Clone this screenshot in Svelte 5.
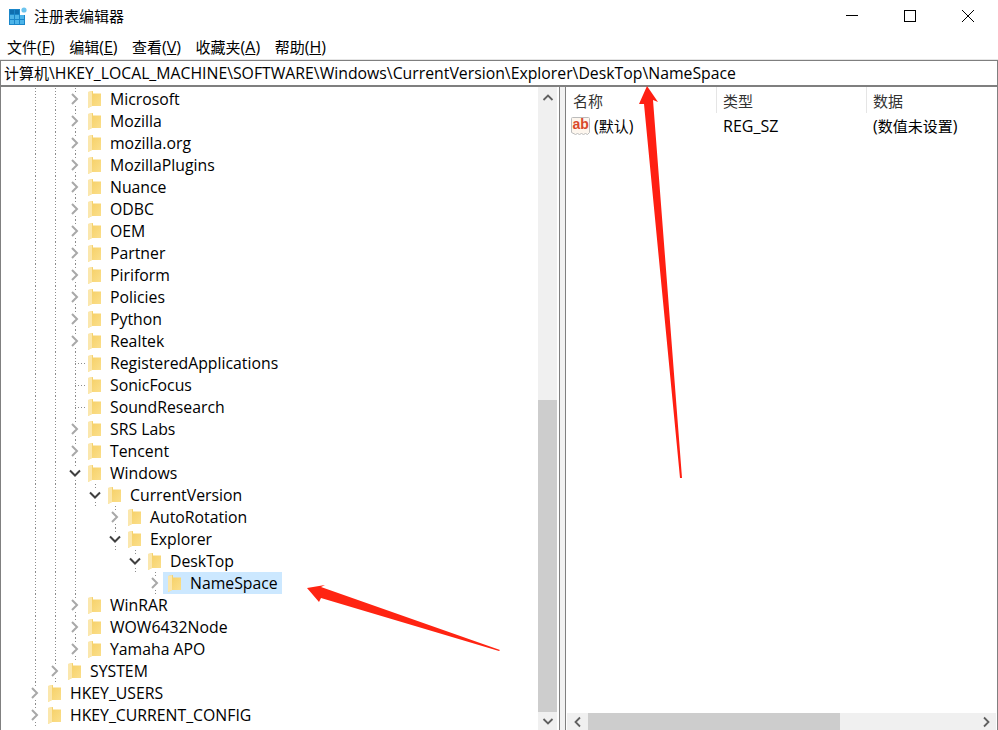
<script lang="ts">
  // Registry editor window: title, menu, address bar, tree pane, value list
  type Row = { name: string; depth: number; state: 'closed' | 'open' | 'leaf'; selected?: boolean };

  const menus = [
    { label: '文件', key: 'F' },
    { label: '编辑', key: 'E' },
    { label: '查看', key: 'V' },
    { label: '收藏夹', key: 'A' },
    { label: '帮助', key: 'H' }
  ];

  const top: string[] = ['Microsoft', 'Mozilla', 'mozilla.org', 'MozillaPlugins', 'Nuance', 'ODBC', 'OEM', 'Partner', 'Piriform', 'Policies', 'Python', 'Realtek'];

  const rows: Row[] = [
    ...top.map((name): Row => ({ name, depth: 3, state: 'closed' })),
    { name: 'RegisteredApplications', depth: 3, state: 'leaf' },
    { name: 'SonicFocus', depth: 3, state: 'leaf' },
    { name: 'SoundResearch', depth: 3, state: 'leaf' },
    { name: 'SRS Labs', depth: 3, state: 'closed' },
    { name: 'Tencent', depth: 3, state: 'closed' },
    { name: 'Windows', depth: 3, state: 'open' },
    { name: 'CurrentVersion', depth: 4, state: 'open' },
    { name: 'AutoRotation', depth: 5, state: 'closed' },
    { name: 'Explorer', depth: 5, state: 'open' },
    { name: 'DeskTop', depth: 6, state: 'open' },
    { name: 'NameSpace', depth: 7, state: 'closed', selected: true },
    { name: 'WinRAR', depth: 3, state: 'closed' },
    { name: 'WOW6432Node', depth: 3, state: 'closed' },
    { name: 'Yamaha APO', depth: 3, state: 'closed' },
    { name: 'SYSTEM', depth: 2, state: 'closed' },
    { name: 'HKEY_USERS', depth: 1, state: 'closed' },
    { name: 'HKEY_CURRENT_CONFIG', depth: 1, state: 'closed' }
  ];

  const path = 'HKEY_LOCAL_MACHINE\\SOFTWARE\\Windows\\CurrentVersion\\Explorer\\DeskTop\\NameSpace';
</script>

<div class="window">
  <header class="titlebar">
    <svg class="appicon" width="20" height="20" viewBox="0 0 20 20">
      <rect x="1" y="3" width="16" height="16" fill="#1a86c9" />
      <g fill="#4db4e8">
        <rect x="2" y="9" width="4" height="4" /><rect x="7" y="9" width="4" height="4" /><rect x="12" y="9" width="4" height="4" />
        <rect x="2" y="14" width="4" height="4" /><rect x="7" y="14" width="4" height="4" /><rect x="12" y="14" width="4" height="4" />
      </g>
      <g fill="#0f6fb0">
        <rect x="2" y="4" width="4" height="4" /><rect x="7" y="4" width="4" height="4" />
      </g>
      <rect x="12" y="3" width="6" height="6" fill="#fff" />
      <circle cx="16" cy="4" r="2.6" fill="#6cc4ee" />
    </svg>
    <span class="title">注册表编辑器</span>
    <div class="controls">
      <svg width="14" height="14" viewBox="0 0 14 14"><path d="M1 6.500h12" stroke="#000" fill="none" /></svg>
      <svg width="14" height="14" viewBox="0 0 14 14"><rect x="1.500" y="1.500" width="11" height="11" stroke="#000" fill="none" /></svg>
      <svg width="14" height="14" viewBox="0 0 14 14"><path d="M1 1l12 12M13 1L1 13" stroke="#000" fill="none" /></svg>
    </div>
  </header>

  <nav class="menubar">
    {#each menus as menu}
      <span><span class="cjk">{menu.label}</span>(<u>{menu.key}</u>)</span>
    {/each}
  </nav>

  <div class="address"><span class="cjk">计算机</span>\{path}</div>

  <main class="panes">
    <section class="tree">
      <div class="rows">
        {#each rows as row}
          <div class="row">
            {#each Array(row.depth - 1) as _, i}
              <span class="col" class:guide={i < 3}></span>
            {/each}
            {#if row.state === 'leaf'}
              <span class="col guide half"></span>
            {:else}
              <span class="col guide">
                <svg class="chev" width="14" height="14" viewBox="0 0 14 14">
                  {#if row.state === 'open'}
                    <path d="M2 4.500L7 9.500l5-5" stroke="#404040" stroke-width="2" fill="none" />
                  {:else}
                    <path d="M4 2l5 5-5 5" stroke="#a8a8a8" stroke-width="2" fill="none" />
                  {/if}
                </svg>
              </span>
            {/if}
            <span class="node" class:selected={row.selected}>
              <svg class="folder" width="13" height="17" viewBox="0 0 13 17">
                <path d="M0 1L5 0v2.500h8V15H4L0 17z" fill="url(#gold)" />
                <path d="M0 1L4 .3V15L0 17z" fill="#fbe7ad" />
              </svg>
              <span class="name">{row.name}</span>
            </span>
          </div>
        {/each}
      </div>
      <div class="vscroll">
        <button class="arrow up" aria-label="up">
          <svg width="12" height="12" viewBox="0 0 12 12"><path d="M1.500 8L6 3.500 10.500 8" stroke="#606060" stroke-width="1.800" fill="none" /></svg>
        </button>
        <div class="vtrack"><div class="vthumb"></div></div>
        <button class="arrow" aria-label="down">
          <svg width="12" height="12" viewBox="0 0 12 12"><path d="M1.500 4L6 8.500 10.500 4" stroke="#606060" stroke-width="1.800" fill="none" /></svg>
        </button>
      </div>
    </section>

    <div class="splitter"></div>

    <section class="list">
      <div class="listhead">
        <span>名称</span>
        <span>类型</span>
        <span>数据</span>
      </div>
      <div class="listrow">
        <span class="valname">
          <svg width="20" height="19" viewBox="0 0 20 19">
            <path d="M.5 1.500a1 1 0 0 1 1-1h16a1 1 0 0 1 1 1v14l-2 2-2-1-2 1-2-1-2 1-2-1-2 1-4-2z" fill="#fdf6ee" stroke="#bcbcbc" />
            <text x="1.500" y="12" class="abtext">ab</text>
          </svg>
          <span>(<span class="cjk">默认</span>)</span>
        </span>
        <span>REG_SZ</span>
        <span>(<span class="cjk">数值未设置</span>)</span>
      </div>
      <div class="listbody"></div>
      <div class="hscroll">
        <button class="arrow" aria-label="left">
          <svg width="12" height="12" viewBox="0 0 12 12"><path d="M8 1.500L3.500 6 8 10.500" stroke="#606060" stroke-width="1.800" fill="none" /></svg>
        </button>
        <div class="hthumb"></div>
        <div class="htrack"></div>
        <button class="arrow" aria-label="right">
          <svg width="12" height="12" viewBox="0 0 12 12"><path d="M4 1.500L8.500 6 4 10.500" stroke="#606060" stroke-width="1.800" fill="none" /></svg>
        </button>
      </div>
    </section>
  </main>

  <!-- red annotation arrows drawn on top of the screenshot -->
  <svg class="marks" width="998" height="730" viewBox="0 0 998 730">
    <defs>
      <linearGradient id="gold" x1="0" y1="0" x2="1" y2="1">
        <stop offset="0" stop-color="#f5cd5f" />
        <stop offset="1" stop-color="#fbe08e" />
      </linearGradient>
    </defs>
    <polygon points="647,86 658,102 653,100 682,478 680,478 644,104 639,104" fill="#ff1f12" />
    <polygon points="307,588 325,585 321,587 500,650 499,651 321,598 319,602" fill="#ff2412" />
  </svg>
</div>

<style>
  :global(body) {
    margin: 0;
    background: #fff;
  }

  .window {
    position: relative;
    width: 998px;
    height: 730px;
    overflow: hidden;
    display: flex;
    flex-direction: column;
    background: #fff;
    color: #000;
    font: 16px/22px "Open Sans", "Noto Sans CJK SC", sans-serif;
  }

  .cjk {
    font-size: 15px;
  }

  .titlebar {
    height: 32px;
    padding: 0 0 2px 8px;
    display: flex;
    align-items: center;
    flex: none;
  }

  .appicon {
    margin-right: 6px;
  }

  .title {
    font-size: 15px;
  }

  .controls {
    margin-left: auto;
    display: flex;
    gap: 44px;
    padding-right: 23px;
  }

  .menubar {
    height: 26px;
    flex: none;
    display: flex;
    align-items: center;
    gap: 14.500px;
    padding-left: 7px;
  }

  .address {
    flex: none;
    height: 24px;
    line-height: 24px;
    font-size: 15.800px;
    border: 1px solid #7f7f7f;
    border-bottom-width: 2px;
    padding-left: 3px;
    box-shadow: 0 -1px 0 #e6e6e6;
  }

  .panes {
    flex: 1;
    min-height: 0;
    display: flex;
  }

  .tree {
    width: 559px;
    box-sizing: border-box;
    flex: none;
    display: flex;
    border-left: 1px solid #808080;
    font-size: 15.800px;
  }

  .rows {
    flex: 1;
    padding-left: 24px;
    padding-top: 1px;
    min-width: 0;
  }

  .row {
    height: 22px;
    display: flex;
    align-items: center;
  }

  .col {
    width: 20px;
    height: 100%;
    flex: none;
    display: flex;
    align-items: center;
    justify-content: center;
  }

  .guide {
    background: repeating-linear-gradient(#8c8c8c 0 1px, transparent 1px 3px) center / 1px 100% no-repeat;
  }

  .half {
    background:
      repeating-linear-gradient(#8c8c8c 0 1px, transparent 1px 3px) center / 1px 100% no-repeat,
      repeating-linear-gradient(90deg, #8c8c8c 0 1px, transparent 1px 3px) 10px 50% / 10px 1px no-repeat;
  }

  .chev {
    background: #fff;
  }

  .node {
    display: flex;
    align-items: center;
    height: 22px;
    margin-left: -2px;
    padding: 0 4px;
  }

  .selected {
    background: #cce8ff;
  }

  .folder {
    margin: 0 9px 0 1px;
    flex: none;
  }

  .name {
    white-space: nowrap;
  }

  .vscroll {
    width: 19px;
    margin-right: 2px;
    flex: none;
    display: flex;
    flex-direction: column;
    background: #f0f0f0;
  }

  .arrow {
    height: 18px;
    width: 19px;
    flex: none;
    padding: 0;
    border: 0;
    background: #f0f0f0;
    display: flex;
    align-items: center;
    justify-content: center;
  }

  .arrow.up {
    height: 21px;
  }

  .vtrack {
    flex: 1;
    display: flex;
    flex-direction: column;
    justify-content: flex-end;
  }

  .vthumb {
    height: 312px;
    background: #cdcdcd;
  }

  .splitter {
    width: 6px;
    box-sizing: border-box;
    flex: none;
    background: #f2f2f2;
    border-left: 1px solid #808080;
  }

  .list {
    flex: 1;
    min-width: 0;
    display: flex;
    flex-direction: column;
    border-left: 1px solid #808080;
    border-right: 1px solid #808080;
    padding: 0 1px;
  }

  .listhead,
  .listrow {
    display: grid;
    grid-template-columns: 150px 150px 1fr;
    flex: none;
    white-space: nowrap;
  }

  .listhead {
    height: 27px;
    font-size: 15px;
    color: #333;
  }

  .listhead span {
    padding-left: 6px;
    height: 26px;
    line-height: 28px;
    border-right: 1px solid #e5e5e5;
  }

  .listhead span:last-child {
    border-right: 0;
  }

  .listrow {
    height: 24px;
    align-items: center;
  }

  .listrow > span {
    padding-left: 6px;
  }

  .listrow > .valname {
    display: flex;
    align-items: center;
    gap: 3px;
    padding-left: 4px;
  }

  .abtext {
    font: bold 14px "Liberation Sans", sans-serif;
    fill: #d9482b;
  }

  .listbody {
    flex: 1;
  }

  .hscroll {
    height: 17px;
    flex: none;
    display: flex;
    background: #f0f0f0;
  }

  .hscroll .arrow {
    width: 21px;
    height: 17px;
  }

  .hthumb {
    width: 252px;
    background: #cdcdcd;
  }

  .htrack {
    flex: 1;
  }

  .marks {
    position: absolute;
    left: 0;
    top: 0;
    pointer-events: none;
  }
</style>
